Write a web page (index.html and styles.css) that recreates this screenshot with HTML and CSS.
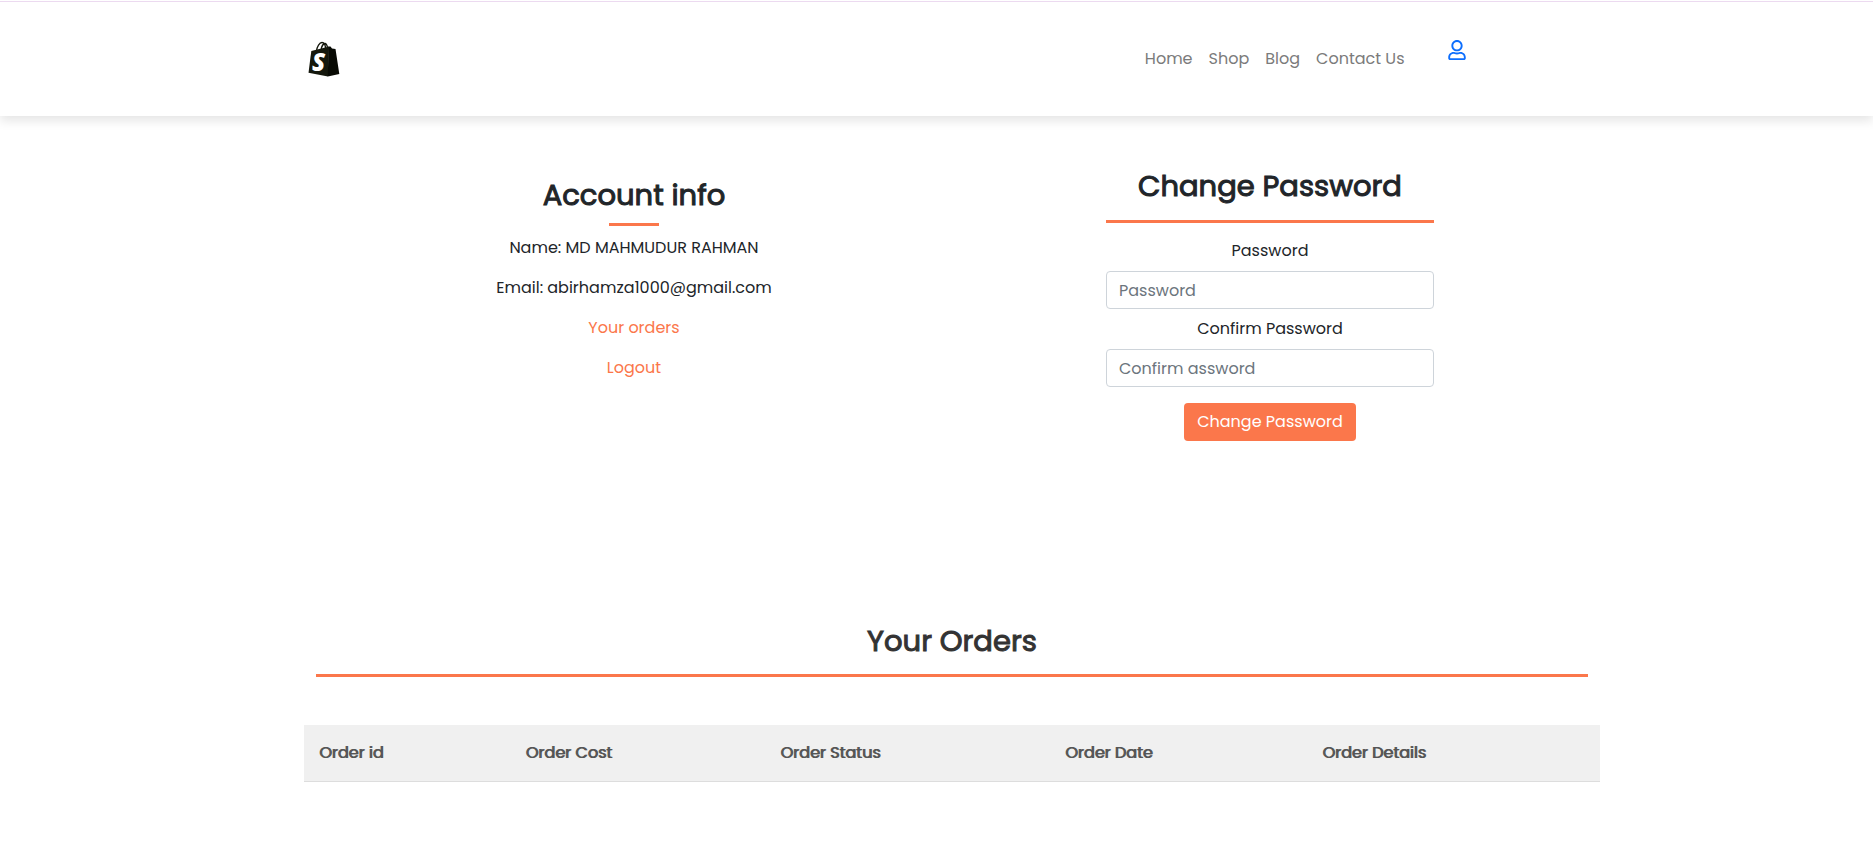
FILE: index.html
```html
<!DOCTYPE html>
<html lang="en">
<head>
<meta charset="utf-8">
<meta name="viewport" content="width=device-width, initial-scale=1">
<title>Account</title>
<link rel="stylesheet" href="styles.css">
</head>
<body>
<header class="site-header">
  <nav class="navbar">
    <a class="brand" href="#" aria-label="Store home">
      <svg class="brand-logo" viewBox="0 0 32 36" aria-hidden="true">
        <path class="handle" d="M8.500 10C9 5.500 11.500 1.500 14 1.500C16.500 1.500 17.500 4.500 17.500 8M13 9.500C13.500 5 15.500 2.500 17 2.500C18.500 2.500 19 4 19.500 6.500"/>
        <path class="bag-front" d="M3.300 10L21 5.500L20 35.500L0.500 31.800Z"/>
        <path class="bag-side" d="M20.500 5.500L22.500 5.500L24 7.500L27.500 8L31.300 33L19.800 35.500Z"/>
        <text class="brand-letter" x="4" y="30">S</text>
      </svg>
    </a>
    <ul class="nav-links">
      <li><a href="#">Home</a></li>
      <li><a href="#">Shop</a></li>
      <li><a href="#">Blog</a></li>
      <li><a href="#">Contact Us</a></li>
    </ul>
    <a class="user-link" href="#" aria-label="Account">
      <svg class="user-icon" viewBox="0 0 448 512" aria-hidden="true"><path d="M313.600 304c-28.700 0-42.500 16-89.600 16-47.100 0-60.800-16-89.600-16C60.200 304 0 364.200 0 438.400V464c0 26.500 21.500 48 48 48h352c26.500 0 48-21.500 48-48v-25.600c0-74.200-60.200-134.400-134.400-134.400zM400 464H48v-25.600c0-47.600 38.800-86.400 86.400-86.400 14.600 0 38.300 16 89.600 16 51.700 0 74.900-16 89.600-16 47.600 0 86.400 38.800 86.400 86.400V464zM224 288c79.500 0 144-64.500 144-144S303.500 0 224 0 80 64.500 80 144s64.500 144 144 144zm0-240c52.900 0 96 43.100 96 96s-43.100 96-96 96-96-43.100-96-96 43.100-96 96-96z"/></svg>
    </a>
  </nav>
</header>
<main class="page">
  <div class="account">
    <section class="info">
      <h2>Account info</h2>
      <hr class="rule rule-short">
      <p>Name: MD MAHMUDUR RAHMAN</p>
      <p>Email: abirhamza1000@gmail.com</p>
      <p><a href="#orders">Your orders</a></p>
      <p><a href="#">Logout</a></p>
    </section>
    <form class="password-form">
      <h2>Change Password</h2>
      <hr class="rule">
      <label for="password">Password</label>
      <input id="password" type="password" placeholder="Password">
      <label for="confirm">Confirm Password</label>
      <input id="confirm" type="password" placeholder="Confirm assword">
      <button type="button">Change Password</button>
    </form>
  </div>
  <section class="orders" id="orders">
    <div class="orders-head">
      <h2>Your Orders</h2>
      <hr class="rule">
    </div>
    <table>
      <thead>
        <tr><th>Order id</th><th>Order Cost</th><th>Order Status</th><th>Order Date</th><th>Order Details</th></tr>
      </thead>
    </table>
  </section>
</main>
</body>
</html>
```
FILE: styles.css
```css
* { box-sizing: border-box; }
body {
  margin: 0;
  background: #fff;
  color: #212529;
  font-family: Poppins, Inter, "Open Sans", sans-serif;
  font-size: 16px;
  line-height: 24px;
  border-top: 1px solid #fff;
}
h2, p, ul { margin: 0; }
a { color: #fb774b; text-decoration: none; }
h2 {
  font-size: 29px;
  line-height: 36px;
  font-weight: 400;
  -webkit-text-stroke: 1px currentColor;
}

.site-header {
  border-top: 1px solid #ecdaf0;
  box-shadow: 0 5px 10px rgba(0, 0, 0, 0.1);
}
.navbar {
  display: flex;
  align-items: center;
  max-width: 1320px;
  height: 114px;
  margin: 0 auto;
  padding: 0 131px 0 31px;
}
.brand { margin-right: auto; }
.brand-logo { display: block; width: 32px; height: 36px; }
.handle { fill: none; stroke: #14170c; stroke-width: 1.3; }
.bag-front { fill: #14170c; }
.bag-side { fill: #080a04; }
.brand-letter { fill: #fff; font: italic 800 24px "Open Sans", sans-serif; }
.nav-links { display: flex; gap: 16px; padding: 0; list-style: none; }
.nav-links a { color: #7b7b7b; }
.user-link { align-self: flex-start; margin: 38px 0 0 43px; }
.user-icon { display: block; width: 18px; height: 20px; fill: #0d6efd; }

.page { padding-left: 31px; }
.account {
  display: grid;
  grid-template-columns: 1fr 1fr;
  justify-items: center;
  max-width: 1272px;
  margin: 0 auto;
  padding-top: 52px;
  text-align: center;
}
.rule { width: 100%; height: 3px; border: 0; margin: 0; background: #fb774b; }
.info { padding-top: 9px; }
.info .rule-short { width: 50px; margin: 10px auto; }
.info p { margin-bottom: 16px; }
.password-form {
  display: flex;
  flex-direction: column;
  align-items: center;
  width: 100%;
  max-width: 328px;
}
.password-form .rule { margin: 16px 0; }
.password-form label { margin-bottom: 8px; }
.password-form input {
  width: 100%;
  height: 38px;
  margin-bottom: 8px;
  padding: 6px 12px;
  border: 1px solid #ced4da;
  border-radius: 4px;
  font: inherit;
  background: #fff;
}
.password-form input::placeholder { color: #6c757d; opacity: 1; }
.password-form button {
  margin-top: 8px;
  padding: 7px 13px;
  border: 0;
  border-radius: 4px;
  background: #fb774b;
  color: #fff;
  font: inherit;
}

.orders { max-width: 1296px; margin: 0 auto; padding-top: 182px; }
.orders-head { padding: 0 12px; text-align: center; color: #333; }
.orders-head .rule { margin: 15px 0 48px; }
table { width: 100%; border-collapse: collapse; }
th {
  height: 56px;
  padding: 15px;
  background: #f0f0f0;
  border-bottom: 1px solid #ddd;
  color: #555;
  font-weight: 400;
  text-align: left;
  text-shadow: 1px 0 0 currentColor;
}
```
